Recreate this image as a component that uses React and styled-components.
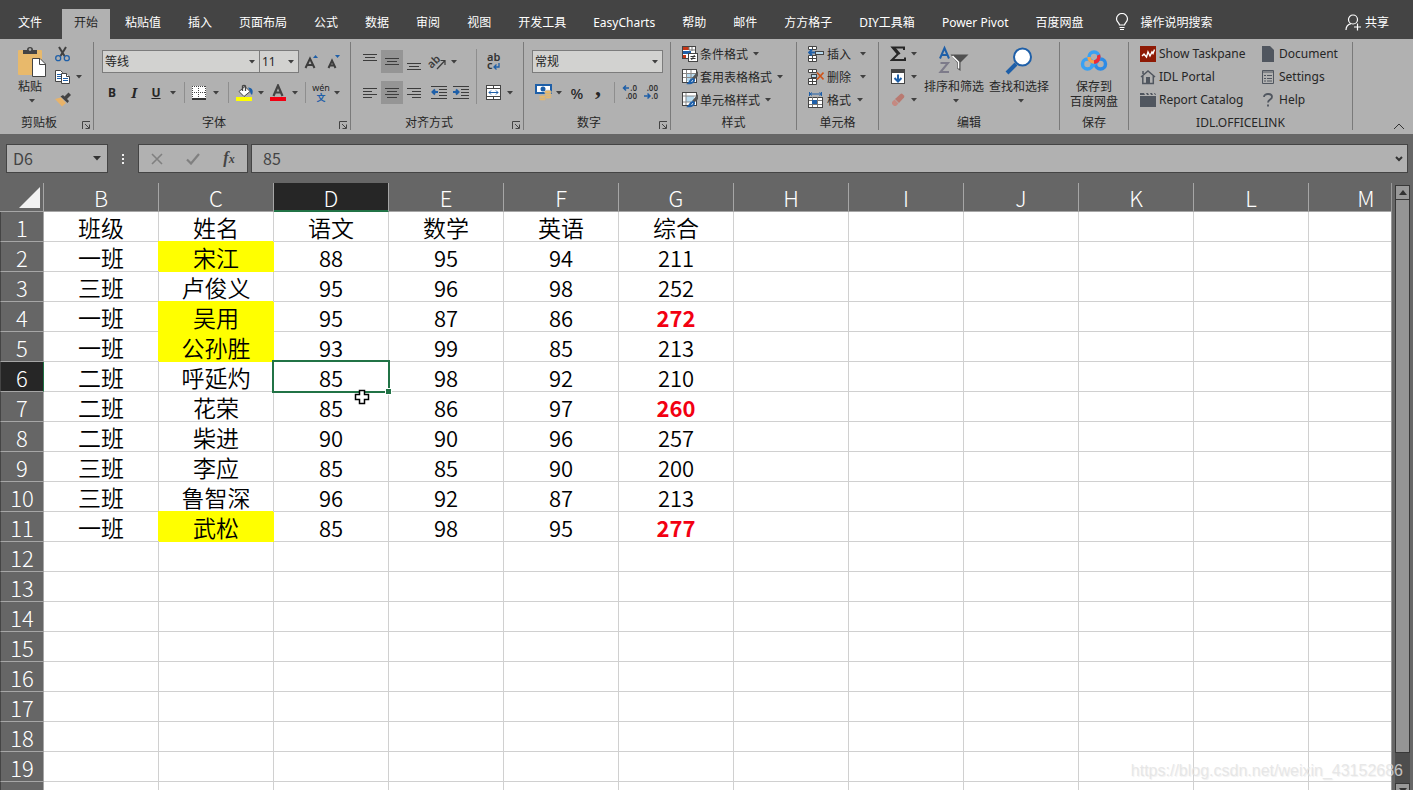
import React, { useState } from "react";
import styled, { createGlobalStyle } from "styled-components";

const columns = ["B", "C", "D", "E", "F", "G", "H", "I", "J", "K", "L", "M"];

const rows = [
  ["班级", "姓名", "语文", "数学", "英语", "综合"],
  ["一班", "宋江", 88, 95, 94, 211],
  ["三班", "卢俊义", 95, 96, 98, 252],
  ["一班", "吴用", 95, 87, 86, 272],
  ["一班", "公孙胜", 93, 99, 85, 213],
  ["二班", "呼延灼", 85, 98, 92, 210],
  ["二班", "花荣", 85, 86, 97, 260],
  ["二班", "柴进", 90, 90, 96, 257],
  ["三班", "李应", 85, 85, 90, 200],
  ["三班", "鲁智深", 96, 92, 87, 213],
  ["一班", "武松", 85, 98, 95, 277],
];

const highlighted = ["宋江", "吴用", "公孙胜", "武松"];
const flagged = [272, 260, 277];
const rowCount = 20;

const tabs = [
  "开始",
  "粘贴值",
  "插入",
  "页面布局",
  "公式",
  "数据",
  "审阅",
  "视图",
  "开发工具",
  "EasyCharts",
  "帮助",
  "邮件",
  "方方格子",
  "DIY工具箱",
  "Power Pivot",
  "百度网盘",
];

/* ---------- icons ---------- */

const Caret = () => (
  <svg width="6" height="4" viewBox="0 0 6 4">
    <path d="M0 0h6L3 3.6z" fill="#404040" />
  </svg>
);

const Launcher = () => (
  <svg width="9" height="9" viewBox="0 0 9 9" fill="none" stroke="#444">
    <path d="M0.5 8V0.5H8M3 3l4 4M7.500 3.500v4h-4" />
  </svg>
);

const PasteIcon = () => (
  <svg width="34" height="32" viewBox="-4 0 34 32">
    <rect x="1" y="4" width="24" height="25" rx="1" fill="#e8b96b" />
    <path d="M6 8V4h4a3 3 0 0 1 6 0h4v4z" fill="#444" />
    <circle cx="13" cy="3.600" r="1.300" fill="#b1b1b1" />
    <path d="M15.500 12.500h7.500l5.500 5.500v12.500h-13z" fill="#fff" stroke="#444" />
    <path d="M22.500 12.500v6h6" fill="none" stroke="#444" />
  </svg>
);

const CutIcon = () => (
  <svg width="16" height="16" viewBox="0 0 16 16" fill="none">
    <path d="M4 1l5.500 9M11 1L5.500 10" stroke="#404040" strokeWidth="2" />
    <circle cx="3.200" cy="12.200" r="2.500" stroke="#1e5fa8" strokeWidth="1.300" />
    <circle cx="11.800" cy="12.200" r="2.500" stroke="#1e5fa8" strokeWidth="1.300" />
  </svg>
);

const CopyIcon = () => (
  <svg width="16" height="16" viewBox="0 0 16 16" fill="#fff" stroke="#444">
    <path d="M0.500 1.500h5l2 2v9h-7z" />
    <path d="M2 5.500h4M2 7.500h4M2 9.500h4" stroke="#1e5fa8" />
    <path d="M6.500 4.500h5l3 3v7h-8z" />
    <path d="M11.500 4.500v3h3" />
    <path d="M8 9.500h5M8 11.500h5" stroke="#1e5fa8" />
  </svg>
);

const BrushIcon = () => (
  <svg width="16" height="16" viewBox="0 0 16 16">
    <path d="M0 7l6-1.500L11 11l-4 3.500z" fill="#e8b36a" />
    <path d="M5.500 4.500L8 3l6 6-1.500 2z" fill="#444" />
    <path d="M9 5l4.500-4.500L16 3l-4.500 4.500z" fill="#444" />
  </svg>
);

const FontSize = ({ small }) => (
  <svg width="16" height="18" viewBox="0 0 16 18">
    <path
      d={small ? "M3.500 15L7 7.500l3.500 7.500M4.500 12.500h5" : "M3.500 15L8 5.500l4.500 9.500M5 12h6"}
      fill="none"
      stroke="#3c3c3c"
      strokeWidth="2"
    />
    <path d={small ? "M10 2h5l-2.500 3z" : "M11 5h5l-2.500-3z"} fill="#1e5fa8" />
  </svg>
);

const BordersIcon = () => (
  <svg width="14" height="14" viewBox="0 0 14 14" shapeRendering="crispEdges">
    <rect width="14" height="14" fill="#fff" />
    <path
      d="M0 .5h14M.5 0v12M6.500 0v12M13.500 0v12M0 6.500h14"
      stroke="#444"
      strokeDasharray="1 1"
    />
    <path d="M0 13h14" stroke="#333" strokeWidth="2" />
  </svg>
);

const FillIcon = () => (
  <svg width="18" height="18" viewBox="0 0 18 18">
    <path d="M3 7.500l6-5 5 5-6 5z" fill="#fff" stroke="#444" />
    <path d="M6.500 7V2a2 2 0 0 1 3 0v5" fill="none" stroke="#444" strokeWidth="1.300" />
    <path d="M12 3.500c5 0 5.500 4 4 7.500-1-1-2-2-2-4z" fill="#1e5fa8" />
    <rect y="13" width="16" height="4" fill="#ff0" />
  </svg>
);

const FontColorIcon = () => (
  <svg width="16" height="18" viewBox="0 0 16 18">
    <path d="M3.500 12L8 1.500 12.500 12M5 8.500h6" fill="none" stroke="#444" strokeWidth="2.200" />
    <rect y="13" width="16" height="4" fill="#f20012" />
  </svg>
);

// horizontal rules, one [x1, x2, y] triple per line
const Lines = ({ lines, children }) => (
  <svg width="16" height="16" viewBox="0 0 16 16" shapeRendering="crispEdges">
    {lines.map(([x1, x2, y]) => (
      <path key={y} d={`M${x1} ${y}.5H${x2}`} stroke="#3c3c3c" />
    ))}
    {children}
  </svg>
);

const OrientIcon = () => (
  <svg width="22" height="22" viewBox="0 0 22 22">
    <text
      x="1"
      y="15"
      transform="rotate(-45 7 11)"
      fontFamily="Noto Sans"
      fontSize="11"
      fontWeight="600"
      fill="#3c3c3c"
    >
      ab
    </text>
    <path d="M11 18l7.500-8M14.500 9.500H19V14" fill="none" stroke="#3c3c3c" strokeWidth="1.200" />
  </svg>
);

const WrapIcon = () => (
  <svg width="14" height="22" viewBox="0 0 14 22">
    <g fontFamily="Noto Sans" fontSize="11" fontWeight="600" fill="#333">
      <text x="0" y="10">
        ab
      </text>
      <text x="0" y="18">
        c
      </text>
    </g>
    <path d="M12 12v4H7.500M9.500 13.500L7 16l2.500 2.500" fill="none" stroke="#1e5fa8" strokeWidth="1.300" />
  </svg>
);

const MergeIcon = () => (
  <svg width="16" height="16" viewBox="0 0 16 16" fill="none" stroke="#444">
    <rect x=".5" y=".5" width="14" height="14" fill="#fff" />
    <path d="M.5 3.500h14M.5 11.500h14M7.500 0v4M7.500 11v4" />
    <path d="M3 7.500h9M5 5.500l-2 2 2 2M10 5.500l2 2-2 2" stroke="#1e5fa8" />
  </svg>
);

const CurrencyIcon = () => (
  <svg width="17" height="17" viewBox="0 0 17 17">
    <rect x="1" y="1" width="15" height="8" fill="#fff" stroke="#1e5fa8" strokeWidth="2" />
    <circle cx="8" cy="5" r="2.500" fill="#1e5fa8" />
    <g fill="#e8b96b" stroke="#b1b1b1" strokeWidth=".6">
      <ellipse cx="13" cy="13" rx="3.500" ry="1.800" />
      <ellipse cx="13" cy="10.500" rx="3.500" ry="1.800" />
      <ellipse cx="13" cy="8" rx="3.500" ry="1.800" />
      <ellipse cx="7.500" cy="15" rx="3.500" ry="1.600" />
      <ellipse cx="7.500" cy="12.800" rx="3.500" ry="1.600" />
    </g>
  </svg>
);

const DecimalIcon = ({ less }) => (
  <svg width="16" height="18" viewBox="0 0 16 18">
    <g fontFamily="Noto Sans" fontSize="8" fontWeight="600" fill="#333" textAnchor="end">
      <text x="15" y="7">{less ? ".00" : ".0"}</text>
      <text x="15" y="15">{less ? ".0" : ".00"}</text>
    </g>
    <path
      d={less ? "M1 12h6M4.500 9.500L7 12l-2.500 2.500" : "M7 4H1.500M4 1.500L1.500 4 4 6.500"}
      fill="none"
      stroke="#1e5fa8"
      strokeWidth="1.500"
    />
  </svg>
);

const ConditionalIcon = () => (
  <svg width="16" height="16" viewBox="0 0 16 16">
    <rect x=".5" y=".5" width="13" height="12" fill="#fff" stroke="#444" />
    <path d="M1 1h6v3H1zM1 9h3v3H1z" fill="#c63616" />
    <path d="M1 5h8v3H1z" fill="#1e5fa8" />
    <path d="M7 1v3M10 1v4M7 4h6" stroke="#777" fill="none" />
    <rect x="6.500" y="7.500" width="9" height="8" fill="#fff" stroke="#444" />
    <path d="M8.500 10.500h5M8.500 12.500h5M12.500 9l-3 5" stroke="#333" />
  </svg>
);

const TableStyleIcon = ({ single }) => (
  <svg width="16" height="16" viewBox="0 0 16 16">
    <rect x=".5" y=".5" width="14" height="13" fill="#fff" stroke="#444" />
    <path d={single ? "M4 4h8v6H4z" : "M5 5h8v7H5z"} fill="#b9dbef" />
    <path
      d={single ? "M4 1v12M1 4h13M1 10h8" : "M4.500 1v12M9 1v12M1 4.500h13M1 8.500h13"}
      stroke="#888"
      fill="none"
    />
    <path d="M16 2v5l-4 4-2-2z" fill="#555" />
    <path d="M11.500 9c2 1 2 3 .5 4.500C10 15.500 6 15.500 4 15c3-1 3-6 7.500-6z" fill="#1e5fa8" />
    <path d="M9.500 12.500l1.500-1" stroke="#fff" />
  </svg>
);

const CellsIcon = ({ kind }) => (
  <svg width="16" height="16" viewBox="0 0 16 16">
    {kind === "format" ? (
      <>
        <path d="M1.500 0v4M13.500 0v4M1 2h13M4 .5L2 2l2 1.500M11.500.5l2 1.500-2 1.500" stroke="#1e5fa8" fill="none" />
        <rect x=".5" y="5.500" width="14" height="10" fill="#fff" stroke="#444" />
        <path d="M1 8.500h13M1 12.500h13M4.500 5v10M9.500 5v10" stroke="#777" />
        <rect x="4" y="8" width="5" height="4" fill="#1e5fa8" />
      </>
    ) : (
      <>
        <path
          d="M.5.5h8v3h-8zM4.500.5v3M.5 9.500h8v6h-8zM4.500 9.500v6M.5 12.500h8"
          fill="#fff"
          stroke="#444"
        />
        <rect
          x={kind === "insert" ? 7.5 : 3.5}
          y="5.500"
          width={kind === "insert" ? 8 : 5}
          height="3"
          fill="#b9dbef"
          stroke="#444"
        />
        {kind === "insert" ? (
          <path d="M7 6.500H1M4 3.500l-3 3 3 3" stroke="#1e5fa8" strokeWidth="1.800" fill="none" />
        ) : (
          <path d="M9 3.500l6.500 7M15.500 3.500L9 10.500" stroke="#cf5418" strokeWidth="1.600" />
        )}
      </>
    )}
  </svg>
);

const SigmaIcon = () => (
  <svg width="16" height="16" viewBox="0 0 16 16">
    <path d="M14 4V1.500H2.500L8 8l-6 6h13v-2.500" fill="none" stroke="#262626" strokeWidth="2" />
    <path d="M1.500 1h3.500l5.500 6.500-1 1z" fill="#262626" />
  </svg>
);

const FillDownIcon = () => (
  <svg width="16" height="15" viewBox="0 0 16 15">
    <rect x="1.500" y=".5" width="13" height="14" fill="#fff" stroke="#444" />
    <path d="M1 0h14v4H1z" fill="#444" />
    <path d="M8 5.500v7M4.500 9L8 12.500 11.500 9" stroke="#1e5fa8" strokeWidth="2" fill="none" />
  </svg>
);

const EraserIcon = () => (
  <svg width="16" height="14" viewBox="0 0 16 14">
    <path d="M5 6l5.500-5q1-.8 2 0l1.500 1.500q.8 1 0 2L9 10z" fill="#b97a71" />
    <path d="M4.500 6.500L8.500 10.500 6 13H4L2 11V9z" fill="#c58a82" />
  </svg>
);

const SortIcon = () => (
  <svg width="32" height="32" viewBox="0 0 32 32">
    <path d="M2 12.500L6.500 2 11 12.500M3.500 9h6" stroke="#1e5fa8" strokeWidth="2" fill="none" />
    <path d="M2.500 17H10L2.500 26H11" stroke="#7d7b8a" strokeWidth="2" fill="none" />
    <path d="M12.500 8.500h18l-8 8V25L19 22.500v-6z" fill="#505050" />
    <path d="M14.500 10l6 6v6.500" stroke="#fff" strokeWidth="1.500" fill="none" />
  </svg>
);

const FindIcon = () => (
  <svg width="30" height="30" viewBox="0 0 30 30">
    <path d="M12 17L3 26" stroke="#1e5fa8" strokeWidth="4" />
    <circle cx="18.500" cy="10" r="8.500" fill="#fff" stroke="#1e5fa8" strokeWidth="2" />
  </svg>
);

const CloudIcon = () => (
  <svg width="28" height="24" viewBox="0 0 28 24" fill="none" strokeWidth="3.500">
    <circle cx="7.500" cy="14" r="5" stroke="#39a1f4" />
    <circle cx="20.500" cy="14" r="5" stroke="#2d8be6" />
    <circle cx="14" cy="7" r="5" stroke="#39a1f4" />
    <path d="M11 17l7-6" stroke="#39a1f4" />
    <path d="M9 7a5 5 0 0 0 5 5" stroke="#f5a24b" />
    <path d="M14 12a5 5 0 0 0 4.500-7" stroke="#ee2a35" />
  </svg>
);

const TaskpaneIcon = () => (
  <svg width="16" height="16" viewBox="0 0 16 16">
    <rect width="16" height="16" fill="#8e1a05" />
    <path d="M2 10l2-2 2.500 3 1.500-5 2 4 2-4 1 1.500 1.500-4" stroke="#fff" strokeWidth="1.400" fill="none" />
  </svg>
);

const HomeIcon = () => (
  <svg width="16" height="16" viewBox="0 0 16 16" fill="none" stroke="#50565f" strokeWidth="1.500">
    <path d="M1 8l7-6 7 6M2.800 7v7.500h10.500V7M3 5V2" />
    <path d="M6 8h4v6H6z" fill="#50565f" stroke="none" />
  </svg>
);

const CatalogIcon = () => (
  <svg width="16" height="16" viewBox="0 0 16 16" fill="#50565f">
    <path d="M0 4h16v11H0zM0 1h4l1 2H0zM6 1h2l1 2H7zM10 1h2l1 2h-2zM14 1h1l1 2h-1z" />
  </svg>
);

const DocumentIcon = () => (
  <svg width="12" height="16" viewBox="0 0 12 16">
    <path d="M0 0h8l4 4v12H0z" fill="#50565f" />
  </svg>
);

const SettingsIcon = () => (
  <svg width="12" height="14" viewBox="0 0 12 14" fill="none" stroke="#50565f">
    <path d="M.5.5h11v13H.5zM.5 2h11" />
    <path d="M2 5.500h2M5 5.500h5M2 8.500h2M5 8.500h5M2 11h2M5 11h5" />
  </svg>
);

const HelpIcon = () => (
  <svg width="12" height="14" viewBox="0 0 12 14" fill="none" stroke="#50565f" strokeWidth="1.800">
    <path d="M2 4c0-4 8-4 8 0 0 2.500-4 2.500-4 5.500M6 11.500v2" />
  </svg>
);

const BulbIcon = () => (
  <svg width="14" height="18" viewBox="0 0 14 18" fill="none" stroke="#fff" strokeWidth="1.200">
    <path d="M4.500 12c0-2-3-3-3-6a5.500 5.500 0 0 1 11 0c0 3-3 4-3 6z" />
    <path d="M4.500 14.500h5M5 16.500h4" />
  </svg>
);

const ShareIcon = () => (
  <svg width="17" height="17" viewBox="0 0 17 17" fill="none" stroke="#fff" strokeWidth="1.200">
    <circle cx="8" cy="5.500" r="4.500" />
    <path d="M1 16c0-3.500 2-5.500 5-6.300M9 13h7M12.500 9.500v7" />
  </svg>
);

/* ---------- page ---------- */

function MenuRow({ icon, label, caret, gap, width }) {
  return (
    <RowButton $gap={gap} $w={width}>
      {icon}
      {label}
      {caret && <Caret />}
    </RowButton>
  );
}

function SmallIcon({ icon, caret, label }) {
  return (
    <RowButton $gap={2} aria-label={label}>
      {icon}
      {caret && <Caret />}
    </RowButton>
  );
}

function Group({ width, label, launcher, children }) {
  return (
    <GroupBox $w={width}>
      <GroupBody>{children}</GroupBody>
      <GroupLabel>{label}</GroupLabel>
      {launcher && (
        <LauncherButton aria-label={`${label} 设置`}>
          <Launcher />
        </LauncherButton>
      )}
    </GroupBox>
  );
}

function Tool({ w = 22, label, active, children }) {
  return (
    <ToolButton $w={w} $active={active} aria-label={label}>
      {children}
    </ToolButton>
  );
}

const Drop = ({ label, w = 10 }) => (
  <Tool w={w} label={label}>
    <Caret />
  </Tool>
);

function Dropdown({ width, label, value }) {
  return (
    <SelectWrap $w={width}>
      <Select aria-label={label} defaultValue={value}>
        <option>{value}</option>
      </Select>
      <Caret />
    </SelectWrap>
  );
}

function Ribbon() {
  return (
    <RibbonBar>
      <Group width={93} label="剪贴板" launcher>
        <BigButton $w={54} $pad={4}>
          <PasteIcon />
          粘贴
          <Caret />
        </BigButton>
        <Stack>
          <SmallIcon label="剪切" icon={<CutIcon />} />
          <SmallIcon label="复制" icon={<CopyIcon />} caret />
          <SmallIcon label="格式刷" icon={<BrushIcon />} />
        </Stack>
      </Group>

      <Group width={257} label="字体" launcher>
        <ToolRows>
          <ToolRow>
            <Dropdown width={158} label="字体" value="等线" />
            <Dropdown width={40} label="字号" value="11" />
            <Tool w={24} label="增大字号">
              <FontSize />
            </Tool>
            <Tool label="减小字号">
              <FontSize small />
            </Tool>
          </ToolRow>
          <ToolRow>
            <Tool w={20} label="加粗">
              <b>B</b>
            </Tool>
            <Tool w={24} label="倾斜">
              <Italic>I</Italic>
            </Tool>
            <Tool w={20} label="下划线">
              <Underline>U</Underline>
            </Tool>
            <Drop w={14} label="下划线样式" />
            <Divider $w={8} />
            <Tool label="边框">
              <BordersIcon />
            </Tool>
            <Drop w={12} label="更多边框" />
            <Divider $w={12} />
            <Tool label="填充颜色">
              <FillIcon />
            </Tool>
            <Drop label="更多填充颜色" />
            <Tool w={24} label="字体颜色">
              <FontColorIcon />
            </Tool>
            <Drop label="更多字体颜色" />
            <Divider $w={10} />
            <Tool label="拼音">
              <Pinyin>
                <span>wén</span>
                <b>文</b>
              </Pinyin>
            </Tool>
            <Drop label="更多拼音" />
          </ToolRow>
        </ToolRows>
      </Group>

      <Group width={173} label="对齐方式" launcher>
        <ToolRows>
          <ToolRow>
            <Tool label="顶端对齐">
              <Lines lines={[[1, 15, 0], [3, 13, 3], [1, 15, 6]]} />
            </Tool>
            <Tool label="垂直居中" active>
              <Lines lines={[[1, 15, 4], [3, 13, 7], [1, 15, 10]]} />
            </Tool>
            <Tool label="底端对齐">
              <Lines lines={[[1, 15, 9], [3, 13, 12], [1, 15, 15]]} />
            </Tool>
            <Tool w={24} label="方向">
              <OrientIcon />
            </Tool>
            <Drop label="更多方向" />
          </ToolRow>
          <ToolRow>
            <Tool label="左对齐">
              <Lines lines={[[1, 15, 3], [1, 10, 6], [1, 15, 9], [1, 10, 12]]} />
            </Tool>
            <Tool label="居中" active>
              <Lines lines={[[1, 15, 3], [3, 13, 6], [1, 15, 9], [3, 13, 12]]} />
            </Tool>
            <Tool label="右对齐">
              <Lines lines={[[1, 15, 3], [6, 15, 6], [1, 15, 9], [6, 15, 12]]} />
            </Tool>
            <Tool w={28} label="减少缩进量">
              <Lines lines={[[0, 16, 1], [8, 16, 4], [8, 16, 7], [8, 16, 10], [0, 16, 13]]}>
                <path d="M7 7H1.500M4 4.500L1.500 7 4 9.500" stroke="#1e5fa8" strokeWidth="2" fill="none" shapeRendering="auto" />
              </Lines>
            </Tool>
            <Tool w={16} label="增加缩进量">
              <Lines lines={[[0, 16, 1], [8, 16, 4], [8, 16, 7], [8, 16, 10], [0, 16, 13]]}>
                <path d="M0 7h5.500M3 4.500L5.500 7 3 9.500" stroke="#1e5fa8" strokeWidth="2" fill="none" shapeRendering="auto" />
              </Lines>
            </Tool>
          </ToolRow>
        </ToolRows>
        <Divider $w={14} $tall />
        <ToolRows $bare>
          <ToolRow>
            <Tool label="自动换行">
              <WrapIcon />
            </Tool>
          </ToolRow>
          <ToolRow>
            <Tool label="合并后居中">
              <MergeIcon />
            </Tool>
            <Drop label="更多合并" />
          </ToolRow>
        </ToolRows>
      </Group>

      <Group width={147} label="数字" launcher>
        <ToolRows>
          <ToolRow>
            <Dropdown width={131} label="数字格式" value="常规" />
          </ToolRow>
          <ToolRow>
            <Tool label="会计数字格式">
              <CurrencyIcon />
            </Tool>
            <Drop label="更多货币" />
            <Tool w={26} label="百分比样式">
              <Sign>%</Sign>
            </Tool>
            <Tool w={16} label="千位分隔样式">
              <Comma>,</Comma>
            </Tool>
            <Divider $w={16} />
            <Tool w={16} label="增加小数位数">
              <DecimalIcon />
            </Tool>
            <Tool w={26} label="减少小数位数">
              <DecimalIcon less />
            </Tool>
          </ToolRow>
        </ToolRows>
      </Group>

      <Group width={126} label="样式">
        <Stack $pad={11}>
          <MenuRow icon={<ConditionalIcon />} label="条件格式" gap={2} caret />
          <MenuRow icon={<TableStyleIcon />} label="套用表格格式" gap={2} caret />
          <MenuRow icon={<TableStyleIcon single />} label="单元格样式" gap={2} caret />
        </Stack>
      </Group>

      <Group width={82} label="单元格">
        <Stack $pad={11}>
          <MenuRow icon={<CellsIcon kind="insert" />} label="插入" caret width={58} />
          <MenuRow icon={<CellsIcon kind="delete" />} label="删除" caret width={58} />
          <MenuRow icon={<CellsIcon kind="format" />} label="格式" caret />
        </Stack>
      </Group>

      <Group width={181} label="编辑">
        <Stack $pad={11} $w={30}>
          <SmallIcon label="自动求和" icon={<SigmaIcon />} caret />
          <SmallIcon label="填充" icon={<FillDownIcon />} caret />
          <SmallIcon label="清除" icon={<EraserIcon />} caret />
        </Stack>
        <BigButton $w={68}>
          <SortIcon />
          排序和筛选
          <Caret />
        </BigButton>
        <BigButton $w={62}>
          <FindIcon />
          查找和选择
          <Caret />
        </BigButton>
      </Group>

      <Group width={69} label="保存">
        <BigButton $w={68}>
          <CloudIcon />
          <span>保存到</span>
          <span>百度网盘</span>
        </BigButton>
      </Group>

      <Group width={224} label="IDL.OFFICELINK">
        <Stack $pad={11} $w={122}>
          <MenuRow icon={<TaskpaneIcon />} label="Show Taskpane" />
          <MenuRow icon={<HomeIcon />} label="IDL Portal" />
          <MenuRow icon={<CatalogIcon />} label="Report Catalog" />
        </Stack>
        <Stack>
          <MenuRow icon={<DocumentIcon />} label="Document" gap={5} />
          <MenuRow icon={<SettingsIcon />} label="Settings" gap={5} />
          <MenuRow icon={<HelpIcon />} label="Help" gap={5} />
        </Stack>
      </Group>

      <CollapseButton aria-label="折叠功能区">
        <svg width="12" height="7" viewBox="0 0 12 7" fill="none" stroke="#333">
          <path d="M1 6l5-5 5 5" />
        </svg>
      </CollapseButton>
    </RibbonBar>
  );
}

function FormulaBar() {
  const [formula, setFormula] = useState("85");

  return (
    <FormulaRow>
      <NameBox>
        <BarInput aria-label="名称框" defaultValue="D6" />
        <BarButton $w={20} aria-label="名称列表">
          <svg width="8" height="5" viewBox="0 0 8 5">
            <path d="M0 0h8L4 4.500z" fill="#333" />
          </svg>
        </BarButton>
      </NameBox>
      <Dots>
        <i />
        <i />
        <i />
      </Dots>
      <FormulaTools>
        <BarButton $w={36} aria-label="取消">
          <svg width="12" height="12" viewBox="0 0 12 12" stroke="#808080" strokeWidth="1.600">
            <path d="M1 1l10 10M11 1L1 11" />
          </svg>
        </BarButton>
        <BarButton $w={36} aria-label="输入">
          <svg width="14" height="12" viewBox="0 0 14 12" stroke="#808080" strokeWidth="2.200" fill="none">
            <path d="M1 6.500l4 4L13 1" />
          </svg>
        </BarButton>
        <BarButton $w={36} aria-label="插入函数">
          <Fx>
            f<small>x</small>
          </Fx>
        </BarButton>
      </FormulaTools>
      <FormulaBox>
        <BarInput
          aria-label="编辑栏"
          value={formula}
          onChange={(e) => setFormula(e.target.value)}
        />
        <BarButton $w={16} aria-label="展开编辑栏">
          <svg width="8" height="6" viewBox="0 0 8 6" fill="none" stroke="#333" strokeWidth="2">
            <path d="M1 1l3 3 3-3" />
          </svg>
        </BarButton>
      </FormulaBox>
    </FormulaRow>
  );
}

function Sheet() {
  return (
    <SheetTable>
      <colgroup>
        <Col $w={44} />
        {columns.map((name) => (
          <Col key={name} $w={115} />
        ))}
      </colgroup>
      <thead>
        <tr>
          <Corner>
            <svg width="21" height="21" viewBox="0 0 21 21">
              <path d="M21 0v21H0z" fill="#f2f2f2" />
            </svg>
          </Corner>
          {columns.map((name) => (
            <ColumnHead key={name} scope="col" $selected={name === "D"}>
              {name}
            </ColumnHead>
          ))}
        </tr>
      </thead>
      <tbody>
        {Array.from({ length: rowCount }, (_, r) => (
          <tr key={r}>
            <RowHead scope="row" $selected={r === 5}>
              {r + 1}
            </RowHead>
            {columns.map((name, c) => {
              const value = rows[r] ? rows[r][c] : undefined;
              const selected = r === 5 && name === "D";
              return (
                <Cell
                  key={name}
                  $number={typeof value === "number"}
                  $yellow={highlighted.includes(value)}
                  $red={flagged.includes(value)}
                >
                  {value}
                  {selected && (
                    <>
                      <Selection />
                      <FillHandle />
                      <Cursor width="16" height="16" viewBox="0 0 16 16">
                        <path
                          d="M5.500 1.500h5v4h4v5h-4v4h-5v-4h-4v-5h4z"
                          fill="#fff"
                          stroke="#000"
                          strokeWidth="1.500"
                        />
                      </Cursor>
                    </>
                  )}
                </Cell>
              );
            })}
          </tr>
        ))}
      </tbody>
    </SheetTable>
  );
}

function App() {
  const [activeTab, setActiveTab] = useState("开始");

  return (
    <Page>
      <GlobalStyle />
      <TabBar>
        <FileTab>文件</FileTab>
        {tabs.map((tab) => (
          <Tab
            key={tab}
            $active={tab === activeTab}
            onClick={() => setActiveTab(tab)}
          >
            {tab}
          </Tab>
        ))}
        <TellMe>
          <BulbIcon />
          操作说明搜索
        </TellMe>
        <Share>
          <ShareIcon />
          共享
        </Share>
      </TabBar>
      <Ribbon />
      <FormulaBar />
      <Workspace>
        <GridArea>
          <Sheet />
        </GridArea>
        <ScrollBar>
          <ScrollButton aria-label="向上滚动">
            <svg width="8" height="5" viewBox="0 0 8 5">
              <path d="M0 5h8L4 0z" fill="#333" />
            </svg>
          </ScrollButton>
          <Thumb />
          <Track />
          <ScrollButton aria-label="向下滚动">
            <svg width="8" height="5" viewBox="0 0 8 5">
              <path d="M0 0h8L4 5z" fill="#333" />
            </svg>
          </ScrollButton>
        </ScrollBar>
      </Workspace>
      <Watermark>https://blog.csdn.net/weixin_43152686</Watermark>
    </Page>
  );
}

const GlobalStyle = createGlobalStyle`
  * {
    box-sizing: border-box;
  }
  body {
    margin: 0;
    background: #666;
    font-family: "Noto Sans", "Noto Sans CJK SC", sans-serif;
    font-size: 12px;
    color: #262626;
  }
  button, input, select {
    font: inherit;
    color: inherit;
    border: 0;
    padding: 0;
    margin: 0;
    background: none;
    white-space: nowrap;
  }
  svg {
    display: block;
    flex: none;
  }
`;

const Page = styled.div`
  position: relative;
  display: flex;
  flex-direction: column;
  height: 100vh;
  overflow: hidden;
`;

const TabBar = styled.nav`
  display: flex;
  align-items: flex-end;
  gap: 3px;
  height: 39px;
  flex: none;
  background: #444;
  color: #fff;
`;

const Tab = styled.button`
  height: 30px;
  padding: 0 12px 4px;
  background: ${(props) => (props.$active ? "#b1b1b1" : "transparent")};
  color: ${(props) => (props.$active ? "#262626" : "#fff")};
`;

const FileTab = styled(Tab)`
  padding: 0 17px 4px 18px;
`;

const TellMe = styled(Tab)`
  display: flex;
  align-items: center;
  gap: 12px;
  margin-left: 4px;
`;

const Share = styled(Tab)`
  display: flex;
  align-items: center;
  gap: 3px;
  margin-left: auto;
  padding: 0 24px 4px 0;
`;

const RibbonBar = styled.div`
  display: flex;
  height: 95px;
  flex: none;
  padding: 3px 0 0 1px;
  background: #b1b1b1;
`;

const GroupBox = styled.section`
  position: relative;
  flex: none;
  width: ${(props) => props.$w}px;
  height: 88px;
  border-right: 1px solid #7a7a7a;
`;

const GroupBody = styled.div`
  display: flex;
  height: 69px;
`;

const GroupLabel = styled.div`
  line-height: 24px;
  text-align: center;
  padding-right: 16px;
  ${GroupBox}:nth-child(n + 5) & {
    padding-right: 0;
  }
`;

const LauncherButton = styled.button`
  position: absolute;
  right: 2px;
  bottom: 0;
`;

const Stack = styled.div`
  display: flex;
  flex-direction: column;
  flex: none;
  padding-left: ${(props) => props.$pad || 0}px;
  width: ${(props) => (props.$w ? `${props.$w + props.$pad}px` : "auto")};
`;

const RowButton = styled.button`
  display: flex;
  align-items: center;
  gap: ${(props) => props.$gap || 3}px;
  width: ${(props) => (props.$w ? `${props.$w}px` : "auto")};
  height: 23px;
  > svg:last-child:not(:first-child) {
    margin-left: ${(props) => (props.$w ? "auto" : "3px")};
  }
`;

const BigButton = styled.button`
  display: flex;
  flex-direction: column;
  align-items: center;
  flex: none;
  width: ${(props) => props.$w}px;
  padding: 3px 0 0 ${(props) => props.$pad || 0}px;
  line-height: 15px;
  > svg:first-child {
    height: 34px;
  }
  > svg:last-child {
    margin: 5px 0 0 4px;
  }
`;

const ToolRows = styled.div`
  display: flex;
  flex-direction: column;
  gap: 8px;
  padding: ${(props) => (props.$bare ? "8px 0 0" : "8px 0 0 8px")};
`;

const ToolRow = styled.div`
  display: flex;
  align-items: center;
  height: 23px;
`;

const ToolButton = styled.button`
  display: flex;
  align-items: center;
  justify-content: center;
  flex: none;
  width: ${(props) => props.$w}px;
  height: 23px;
  background: ${(props) => (props.$active ? "#959595" : "transparent")};
`;

const Italic = styled.em`
  font-family: "Noto Serif", "Liberation Serif", serif;
  font-size: 14px;
  font-weight: 700;
`;

const Underline = styled.u`
  font-weight: 700;
`;

const Pinyin = styled.span`
  display: flex;
  flex-direction: column;
  align-items: center;
  font-size: 9px;
  line-height: 10px;
  b {
    color: #1e5fa8;
  }
`;

const Sign = styled.span`
  font-size: 15px;
  line-height: 18px;
  font-weight: 500;
`;

const Comma = styled.b`
  font-family: "Liberation Serif", serif;
  font-size: 24px;
  line-height: 10px;
  padding-bottom: 12px;
`;

const Divider = styled.div`
  display: flex;
  justify-content: center;
  width: ${(props) => props.$w}px;
  height: ${(props) => (props.$tall ? 55 : 21)}px;
  margin-top: ${(props) => (props.$tall ? 7 : 0)}px;
  &::before {
    content: "";
    width: 1px;
    background: #8e8e8e;
  }
`;

const SelectWrap = styled.div`
  display: flex;
  align-items: center;
  width: ${(props) => props.$w}px;
  height: 23px;
  margin-right: -1px;
  border: 1px solid #7c7c7c;
  background: #d2d2d0;
  > svg {
    margin: 0 4px 0 -10px;
    pointer-events: none;
  }
`;

const Select = styled.select`
  appearance: none;
  flex: 1;
  min-width: 0;
  height: 21px;
  padding-left: 2px;
`;

const CollapseButton = styled.button`
  align-self: flex-end;
  margin: 0 8px 4px auto;
`;

const FormulaRow = styled.div`
  display: flex;
  flex: none;
  height: 49px;
  padding: 10px 5px 10px 6px;
  font-size: 16px;
`;

const Box = styled.div`
  display: flex;
  align-items: center;
  height: 29px;
  border: 1px solid #444;
  background: #b1b1b1;
  color: #444;
`;

const NameBox = styled(Box)`
  width: 102px;
`;

const FormulaTools = styled(Box)`
  width: 110px;
  margin-right: 3px;
`;

const FormulaBox = styled(Box)`
  flex: 1;
  padding-left: 5px;
`;

const BarInput = styled.input`
  flex: 1;
  min-width: 0;
  height: 27px;
  padding: 0 0 2px 6px;
  font-family: "Noto Sans CJK SC", sans-serif;
`;

const BarButton = styled.button`
  display: flex;
  justify-content: center;
  width: ${(props) => props.$w}px;
`;

const Dots = styled.div`
  display: flex;
  flex-direction: column;
  align-items: center;
  justify-content: center;
  gap: 2px;
  width: 30px;
  i {
    width: 2px;
    height: 2px;
    background: #f0f0f0;
  }
`;

const Fx = styled.em`
  font-family: "Liberation Serif", serif;
  font-weight: 700;
  line-height: 16px;
  small {
    font-size: 12px;
  }
`;

// the last scroll arrow runs a little past the window edge
const Workspace = styled.main`
  display: flex;
  flex: 1;
  min-height: 0;
  margin-bottom: -8px;
`;

const GridArea = styled.div`
  flex: 1;
  min-width: 0;
  overflow: hidden;
  border-right: 1px solid #999;
`;

const SheetTable = styled.table`
  table-layout: fixed;
  width: 1424px;
  border-collapse: separate;
  border-spacing: 0;
  font-family: "Noto Sans CJK SC", sans-serif;
  font-weight: 350;
  font-size: 22px;
  line-height: 26px;
`;

const Col = styled.col`
  width: ${(props) => props.$w}px;
`;

const Head = styled.th`
  padding: 1px 0 0;
  font-weight: 300;
  color: #fff;
  border: 0 solid #a6a6a6;
  border-right-width: 1px;
  border-bottom-width: 1px;
  background: ${(props) => (props.$selected ? "#262626" : "#666")};
`;

const Corner = styled(Head)`
  height: 29px;
  padding: 0 3px 3px 0;
  vertical-align: bottom;
  svg {
    margin-left: auto;
  }
`;

const ColumnHead = styled(Head)`
  height: 29px;
  padding: 0;
  box-shadow: ${(props) => (props.$selected ? "inset 0 -1px #217346" : "none")};
  border-bottom-color: ${(props) => (props.$selected ? "#217346" : "#a6a6a6")};
`;

const RowHead = styled(Head)`
  height: 30px;
  border-left: 1px solid #444;
  border-right-color: ${(props) => (props.$selected ? "#217346" : "#a6a6a6")};
`;

const Cell = styled.td`
  position: relative;
  height: 30px;
  padding: 0;
  text-align: center;
  font-size: ${(props) => (props.$number ? 22 : 23)}px;
  font-weight: ${(props) => (props.$red ? 700 : 350)};
  color: ${(props) => (props.$red ? "#f20012" : "#000")};
  background: ${(props) => (props.$yellow ? "#ff0" : "#fff")};
  border: 0 solid ${(props) => (props.$yellow ? "#ff0" : "#d0d0d0")};
  border-right-width: 1px;
  border-bottom-width: 1px;
  box-shadow: ${(props) => (props.$yellow ? "-1px -1px #ff0" : "none")};
`;

const Selection = styled.div`
  position: absolute;
  inset: -2px;
  z-index: 1;
  border: 2px solid #217346;
`;

const FillHandle = styled.div`
  position: absolute;
  right: -4px;
  bottom: -4px;
  z-index: 2;
  width: 7px;
  height: 7px;
  border: 1px solid #fff;
  background: #217346;
`;

const Cursor = styled.svg`
  position: absolute;
  left: 80px;
  top: 27px;
  z-index: 3;
`;

const ScrollBar = styled.div`
  display: flex;
  flex-direction: column;
  flex: none;
  width: 21px;
  padding: 2px 3px 0;
`;

const ScrollButton = styled.button`
  display: flex;
  align-items: center;
  justify-content: center;
  flex: none;
  height: 15px;
  border: 1px solid #383838;
  background: #999;
`;

const Thumb = styled.div`
  flex: 1;
  border: 1px solid #383838;
  border-top-width: 0;
  background: #959595;
`;

const Track = styled.div`
  flex: none;
  height: 30px;
  background: #4d4d4d;
`;

const Watermark = styled.div`
  position: absolute;
  right: 10px;
  bottom: 9px;
  font-family: "Liberation Sans", Arial, sans-serif;
  font-size: 16px;
  line-height: 20px;
  color: rgba(226, 226, 226, 0.8);
  text-shadow: 1px 1px 1px rgba(0, 0, 0, 0.06);
  pointer-events: none;
`;

export default App;
